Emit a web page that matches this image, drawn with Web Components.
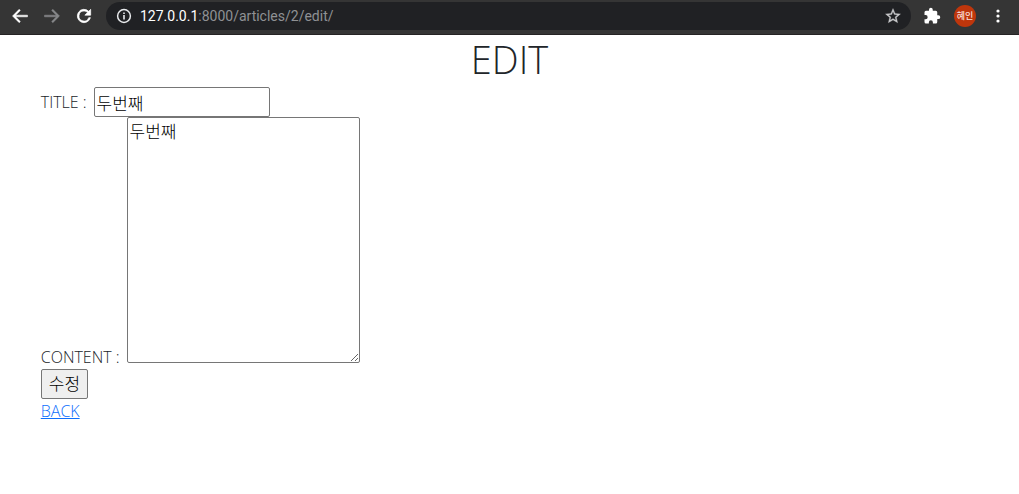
<!DOCTYPE html>
<html lang="ko">
<head>
<meta charset="utf-8">
<meta name="viewport" content="width=device-width, initial-scale=1">
<title>EDIT</title>
<style>
body { margin: 0; background: #fff; color: #212529; font: 300 16px/24px "Open Sans", "Noto Sans CJK KR", sans-serif; }
</style>
</head>
<body>
<browser-bar initials="혜인"><span slot="host">127.0.0.1</span><span slot="path">:8000/articles/2/edit/</span></browser-bar>
<article-editor heading="EDIT">
  <title-field label="TITLE :" value="두번째"></title-field>
  <content-field label="CONTENT :" value="두번째"></content-field>
  <submit-button>수정</submit-button>
  <back-link href="#articles">BACK</back-link>
</article-editor>
<script>
class Base extends HTMLElement {
  render(html) { this.attachShadow({ mode: 'open' }).innerHTML = html; }
}

customElements.define('browser-bar', class extends Base {
  connectedCallback() {
    this.render(`<style>
      :host { display: flex; align-items: center; box-sizing: border-box; height: 35px; padding: 0 11px 3px 10px; background: #353535; border-bottom: 1px solid #252324; color: #fff; }
      button { display: grid; place-items: center; border: 0; padding: 0; background: none; color: inherit; width: 20px; height: 20px; flex: none; }
      svg { display: block; fill: currentColor; width: 20px; height: 20px; }
      .nav, .tools { display: flex; align-items: center; gap: 12px; }
      .off { color: #87888a; }
      .url { flex: 1; display: flex; align-items: center; min-width: 0; height: 28px; margin: 0 11px 0 12px; padding: 0 8px; box-sizing: border-box; border-radius: 14px; background: #202124; }
      .url svg { width: 20px; height: 20px; }
      .text { flex: 1; margin-left: 6px; font: 400 14px/20px Roboto, sans-serif; white-space: nowrap; overflow: hidden; outline: 0; }
      ::slotted([slot=path]) { color: #8f9194; }
      .star { color: #c8c9cb; }
      .url .star svg { width: 18px; height: 18px; }
      .ext svg { width: 18px; height: 18px; }
      .avatar { width: 22px; height: 22px; border-radius: 50%; background: #bf360c; color: #f8ded6; font: 500 9px/22px "Noto Sans CJK KR", sans-serif; }
    </style>
    <div class="nav">
      <button aria-label="Back"><svg viewBox="0 0 24 24"><path d="M21 11H6.8l5.6-5.6L11 4l-8 8 8 8 1.4-1.4L6.8 13H21z" stroke="currentColor" stroke-width=".6"/></svg></button>
      <button class="off" aria-label="Forward"><svg viewBox="0 0 24 24"><path d="M3 11h14.2l-5.6-5.6L13 4l8 8-8 8-1.4-1.4 5.6-5.6H3z" stroke="currentColor" stroke-width=".6"/></svg></button>
      <button aria-label="Reload"><svg viewBox="0 0 24 24"><path d="M17.65 6.35A8 8 0 1 0 19.73 14h-2.08A6 6 0 1 1 12 6c1.66 0 3.14.69 4.22 1.78L13 11h7V4z" stroke="currentColor" stroke-width=".8"/></svg></button>
    </div>
    <div class="url">
      <svg viewBox="0 0 20 20" aria-hidden="true"><circle cx="10" cy="10" r="6.4" fill="none" stroke="#e8eaed" stroke-width="1.5"/><path fill="#e8eaed" d="M9.2 9h1.6v4.5H9.2zM9.2 6.4h1.6v1.6H9.2z"/></svg>
      <div class="text" role="textbox" aria-label="Address" tabindex="0"><slot name="host"></slot><slot name="path"></slot></div>
      <button class="star" aria-label="Bookmark"><svg viewBox="0 0 24 24"><path d="M22 9.24l-7.19-.62L12 2 9.19 8.63 2 9.24l5.46 4.73L5.82 21 12 17.27 18.18 21l-1.63-7.03zM12 15.4l-3.76 2.27 1-4.28-3.32-2.88 4.38-.38L12 6.1l1.71 4.04 4.38.38-3.32 2.88 1 4.28z" stroke="currentColor" stroke-width=".4"/></svg></button>
    </div>
    <div class="tools">
      <button class="ext" aria-label="Extensions"><svg viewBox="0 0 24 24"><path d="M20.5 11H19V7a2 2 0 0 0-2-2h-4V3.5a2.5 2.5 0 0 0-5 0V5H4a2 2 0 0 0-2 2v3.8h1.5a2.7 2.7 0 0 1 0 5.4H2V20a2 2 0 0 0 2 2h3.8v-1.5a2.7 2.7 0 0 1 5.4 0V22H17a2 2 0 0 0 2-2v-4h1.5a2.5 2.5 0 0 0 0-5z"/></svg></button>
      <button class="avatar" aria-label="Profile">${this.getAttribute('initials')}</button>
      <button aria-label="Menu"><svg viewBox="0 0 20 20"><circle cx="10" cy="5" r="1.6"/><circle cx="10" cy="10" r="1.6"/><circle cx="10" cy="15" r="1.6"/></svg></button>
    </div>`);
  }
});

customElements.define('article-editor', class extends Base {
  connectedCallback() {
    this.render(`<style>
      :host { display: block; }
      h1 { margin: 0 0 4px; text-align: center; font-size: 38px; line-height: 48px; font-weight: 300; }
      form { display: flex; flex-direction: column; align-items: flex-start; padding: 0 4%; }
    </style>
    <h1>${this.getAttribute('heading')}</h1>
    <form><slot></slot></form>`);
  }
});

const control = `
  label { white-space: nowrap; }
  input, textarea { display: block; box-sizing: border-box; margin: 0; border: 1px solid #767676; border-radius: 2px; padding: 2px; background: #fff; color: #000; font: inherit; font-size: 17px; outline: 0; }`;

customElements.define('title-field', class extends Base {
  connectedCallback() {
    this.render(`<style>:host { display: flex; align-items: center; gap: 7px; max-width: 100%; } ${control}
      input { width: 176px; height: 30px; min-width: 0; }</style>
    <label for="title">${this.getAttribute('label')}</label>
    <input id="title" type="text" value="${this.getAttribute('value')}">`);
  }
});

customElements.define('content-field', class extends Base {
  connectedCallback() {
    this.render(`<style>:host { display: flex; align-items: flex-end; gap: 7px; max-width: 100%; } ${control}
      textarea { width: 233px; height: 246px; margin-bottom: 6px; resize: both; }</style>
    <label for="content">${this.getAttribute('label')}</label>
    <textarea id="content">${this.getAttribute('value')}</textarea>`);
  }
});

customElements.define('submit-button', class extends Base {
  connectedCallback() {
    this.render(`<style>:host { display: block; }
      button { display: block; box-sizing: border-box; height: 30px; margin: 0; padding: 0 7px; border: 1px solid #767676; border-radius: 2px; background: #efefef; color: #000; font: inherit; font-size: 17px; }</style>
    <button type="submit"><slot></slot></button>`);
  }
});

customElements.define('back-link', class extends Base {
  connectedCallback() {
    this.render(`<style>:host { display: block; } a { color: #0d6efd; text-decoration: underline; }</style>
    <a href="${this.getAttribute('href')}"><slot></slot></a>`);
  }
});
</script>
</body>
</html>
